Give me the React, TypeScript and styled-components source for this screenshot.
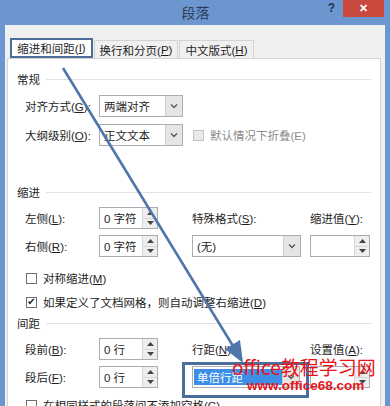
import styled, { createGlobalStyle } from "styled-components";

const GlobalStyle = createGlobalStyle`
  body {
    margin: 0;
    font-family: "Liberation Sans", "Noto Sans CJK SC", sans-serif;
    font-size: 11.5px;
    color: #1e1e1e;
  }
`;

export default function App() {
  return (
    <Window>
      <GlobalStyle />
      <TitleBar>
        <span />
        <Title>段落</Title>
        <TitleButtons>
          <Help>?</Help>
          <Close>✕</Close>
        </TitleButtons>
      </TitleBar>
      <Body>
        <Tabs>
          <Tab $w={83} $active>
            缩进和间距(<u>I</u>)
          </Tab>
          <Tab $w={84}>
            换行和分页(<u>P</u>)
          </Tab>
          <Tab $w={75}>
            中文版式(<u>H</u>)
          </Tab>
        </Tabs>
        <Panel>
          <SectionHead>
            常规
            <Rule />
          </SectionHead>
          <Grid $top={7}>
            <Label>
              对齐方式(<u>G</u>):
            </Label>
            <Select w={84} value="两端对齐" />
          </Grid>
          <Grid $top={7}>
            <Label>
              大纲级别(<u>O</u>):
            </Label>
            <Select w={84} value="正文文本" />
            <CheckRow $span>
              <Box $disabled />
              <Muted>默认情况下折叠(E)</Muted>
            </CheckRow>
          </Grid>

          <SectionHead $top={37}>
            缩进
            <Rule />
          </SectionHead>
          <Grid $top={6}>
            <Label>
              左侧(<u>L</u>):
            </Label>
            <Spinner w={59} value="0 字符" />
            <Label>
              特殊格式(<u>S</u>):
            </Label>
            <Label>
              缩进值(<u>Y</u>):
            </Label>
          </Grid>
          <Grid $top={6}>
            <Label>
              右侧(<u>R</u>):
            </Label>
            <Spinner w={59} value="0 字符" />
            <Select w={109} value="(无)" />
            <Spinner w={60} value="" />
          </Grid>
          <CheckLine $top={13}>
            <Box />
            <span>
              对称缩进(<u>M</u>)
            </span>
          </CheckLine>
          <CheckLine $top={8}>
            <Box $checked>✔</Box>
            <span>
              如果定义了文档网格，则自动调整右缩进(<u>D</u>)
            </span>
          </CheckLine>

          <SectionHead $top={4}>
            间距
            <Rule />
          </SectionHead>
          <Grid $top={6}>
            <Label>
              段前(<u>B</u>):
            </Label>
            <Spinner w={59} value="0 行" />
            <Label>
              行距(<u>N</u>):
            </Label>
            <Label>
              设置值(<u>A</u>):
            </Label>
          </Grid>
          <Grid $top={6}>
            <Label>
              段后(<u>F</u>):
            </Label>
            <Spinner w={59} value="0 行" />
            <Select w={108} value="单倍行距" selected />
            <Spinner w={60} value="" />
          </Grid>
          <CheckLine $top={9}>
            <Box />
            <span>
              在相同样式的段落间不添加空格(<u>C</u>)
            </span>
          </CheckLine>
        </Panel>
      </Body>

      <Callout />
      <Arrow width="390" height="406">
        <line x1="63" y1="68" x2="233" y2="346" stroke="#4f76ab" strokeWidth="2.6" />
        <polygon points="243,363 225,349 240,340" fill="#4f76ab" />
      </Arrow>
      <Watermark>
        <Big>office教程学习网</Big>
        <Small>www.office68.com</Small>
      </Watermark>
    </Window>
  );
}

function Select({ w, value, selected }: { w: number; value: string; selected?: boolean }) {
  return (
    <Field $w={w}>
      <FieldText>{selected ? <Highlight>{value}</Highlight> : value}</FieldText>
      <DropButton>
        <svg width="8" height="6" viewBox="0 0 8 6">
          <path d="M1 1.5 L4 4.5 L7 1.5" fill="none" stroke="#555" strokeWidth="1.3" />
        </svg>
      </DropButton>
    </Field>
  );
}

function Spinner({ w, value }: { w: number; value: string }) {
  return (
    <Field $w={w}>
      <FieldText>{value}</FieldText>
      <SpinButtons>
        <SpinHalf>
          <svg width="7" height="4" viewBox="0 0 7 4">
            <path d="M0 4 L3.5 0 L7 4 Z" fill="#444" />
          </svg>
        </SpinHalf>
        <SpinHalf>
          <svg width="7" height="4" viewBox="0 0 7 4">
            <path d="M0 0 L3.5 4 L7 0 Z" fill="#444" />
          </svg>
        </SpinHalf>
      </SpinButtons>
    </Field>
  );
}

const Window = styled.div`
  position: relative;
  width: 390px;
  height: 406px;
  overflow: hidden;
  background: #6b96cf;
  display: flex;
  flex-direction: column;
`;

const TitleBar = styled.div`
  height: 25px;
  display: grid;
  grid-template-columns: 1fr auto 1fr;
  align-items: start;
`;

const Title = styled.div`
  font-family: "Noto Sans CJK SC", sans-serif;
  font-size: 14px;
  line-height: 25px;
  color: #2b3c55;
  padding-left: 1px;
`;

const TitleButtons = styled.div`
  display: flex;
  justify-content: flex-end;
  align-items: flex-start;
  padding-right: 6px;
`;

const Help = styled.div`
  font-weight: bold;
  font-size: 12px;
  color: #23344d;
  line-height: 16px;
  margin-right: 8px;
`;

const Close = styled.div`
  width: 41px;
  height: 17px;
  background: #c9493f;
  color: #fff;
  font-size: 11px;
  font-weight: bold;
  display: flex;
  align-items: center;
  justify-content: center;
`;

const Body = styled.div`
  flex: 1;
  margin: 0 5px 0 5px;
  background: #f0f0f0;
  padding: 13px 4px 0 2px;
  display: flex;
  flex-direction: column;
`;

const Tabs = styled.div`
  display: flex;
  margin-left: 3px;
  height: 20px;
`;

const Tab = styled.div<{ $w: number; $active?: boolean }>`
  width: ${(p) => p.$w}px;
  box-sizing: border-box;
  display: flex;
  align-items: center;
  justify-content: center;
  background: ${(p) => (p.$active ? "#fff" : "#f0f0f0")};
  border: ${(p) => (p.$active ? "2px solid #4a6d9c" : "1px solid #d4d4d4")};
  border-bottom: ${(p) => (p.$active ? "2px solid #4a6d9c" : "none")};
  margin-top: ${(p) => (p.$active ? 0 : 2)}px;
  height: ${(p) => (p.$active ? 20 : 18)}px;
  margin-right: 1px;
  white-space: nowrap;
`;

const Panel = styled.div`
  flex: 1;
  background: #fff;
  border: 1px solid #d4d4d4;
  padding: 11px 0 0 0;
`;

const SectionHead = styled.div<{ $top?: number }>`
  display: flex;
  align-items: center;
  gap: 6px;
  margin: ${(p) => p.$top ?? 0}px 9px 0 9px;
  height: 18px;
`;

const Rule = styled.div`
  flex: 1;
  height: 1px;
  background: #dde3e8;
`;

const Grid = styled.div<{ $top: number }>`
  display: grid;
  grid-template-columns: 74px 93px 118px 1fr;
  align-items: center;
  margin-top: ${(p) => p.$top}px;
  padding-left: 17px;
  height: 22px;
`;

const Label = styled.div`
  white-space: nowrap;
`;

const Field = styled.div<{ $w: number }>`
  width: ${(p) => p.$w}px;
  height: 22px;
  box-sizing: border-box;
  border: 1px solid #abadb3;
  background: #fff;
  display: flex;
`;

const FieldText = styled.div`
  flex: 1;
  display: flex;
  align-items: center;
  padding-left: 4px;
  white-space: nowrap;
  overflow: hidden;
`;

const Highlight = styled.span`
  display: flex;
  align-items: center;
  align-self: stretch;
  margin: 2px 0 2px -3px;
  padding-left: 3px;
  width: 100%;
  background: #3d8ee6;
  color: #fff;
`;

const DropButton = styled.div`
  width: 16px;
  background: #e5e5e5;
  border-left: 1px solid #cfcfcf;
  display: flex;
  align-items: center;
  justify-content: center;
`;

const SpinButtons = styled.div`
  width: 14px;
  display: flex;
  flex-direction: column;
  border-left: 1px solid #d6d6d6;
`;

const SpinHalf = styled.div`
  flex: 1;
  background: #eeeeee;
  display: flex;
  align-items: center;
  justify-content: center;
  & + & {
    border-top: 1px solid #d6d6d6;
  }
`;

const CheckRow = styled.div<{ $span?: boolean }>`
  display: flex;
  align-items: center;
  gap: 5px;
  grid-column: ${(p) => (p.$span ? "3 / 5" : "auto")};
  margin-left: 1px;
`;

const CheckLine = styled.div<{ $top: number }>`
  display: flex;
  align-items: center;
  gap: 5px;
  margin: ${(p) => p.$top}px 0 0 18px;
  height: 16px;
  white-space: nowrap;
`;

const Box = styled.span<{ $checked?: boolean; $disabled?: boolean }>`
  width: 11px;
  height: 11px;
  box-sizing: border-box;
  border: 1px solid ${(p) => (p.$disabled ? "#c4c4c4" : "#6f6f6f")};
  background: ${(p) => (p.$disabled ? "#e9e9e9" : "#fff")};
  display: flex;
  align-items: center;
  justify-content: center;
  font-family: "DejaVu Sans", sans-serif;
  font-size: 10px;
  line-height: 1;
  color: #222;
  margin-right: 1px;
`;

const Muted = styled.span`
  color: #8c8c8c;
`;

const Callout = styled.div`
  position: absolute;
  left: 182px;
  top: 362px;
  width: 127px;
  height: 36px;
  box-sizing: border-box;
  border: 3px solid #4a6d9c;
  pointer-events: none;
`;

const Arrow = styled.svg`
  position: absolute;
  left: 0;
  top: 0;
  pointer-events: none;
`;

const Watermark = styled.div`
  position: absolute;
  left: 232px;
  top: 356px;
  display: flex;
  flex-direction: column;
  color: #e8141a;
  pointer-events: none;
  font-family: "Noto Sans CJK SC", sans-serif;
`;

const Big = styled.div`
  font-size: 19px;
  line-height: 22px;
  white-space: nowrap;
`;

const Small = styled.div`
  font-family: "Liberation Sans", sans-serif;
  font-weight: bold;
  font-size: 13.5px;
  line-height: 15px;
  margin-left: 15px;
  white-space: nowrap;
`;
